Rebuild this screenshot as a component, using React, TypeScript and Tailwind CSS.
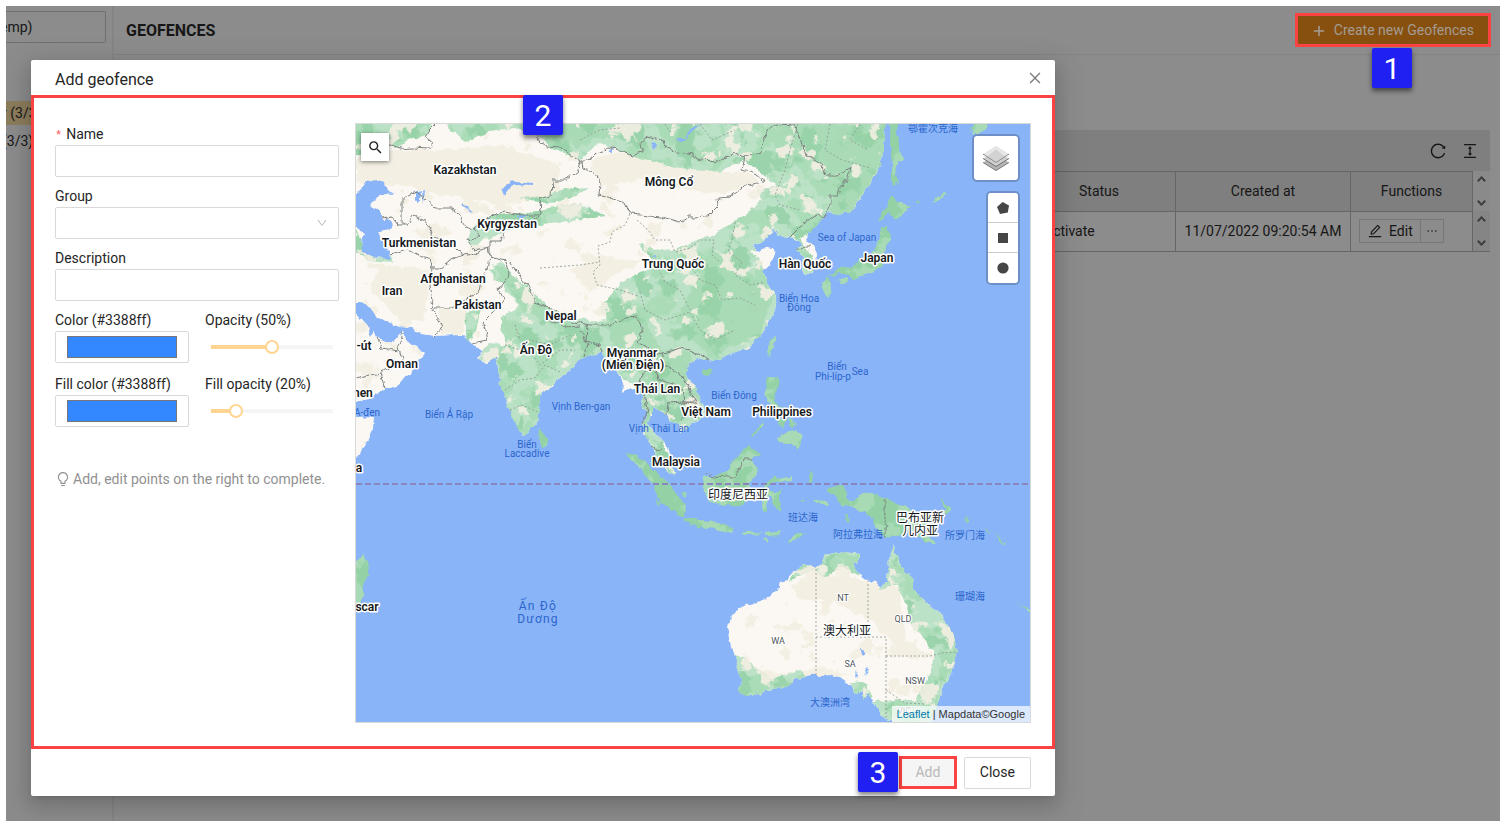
import { useState } from "react";
import type { CSSProperties, ReactNode } from "react";
import {
  AiOutlineBulb,
  AiOutlineClose,
  AiOutlineColumnHeight,
  AiOutlineDown,
  AiOutlineEdit,
  AiOutlineEllipsis,
  AiOutlinePlus,
  AiOutlineReload,
} from "react-icons/ai";
import { MdSearch } from "react-icons/md";

/* ---------- Map geometry ---------- */

const CONTINENT =
  "M340 110H887V124L883 145L883 153L880 165L872 180L862 197L855 208L847 214L837 213L828 212L823 218L817 225L810 232L806 239L813 246L817 255L818 265L813 272L805 275L802 270L803 257L798 251L802 244L798 240L790 237L779 236L777 230L773 228L766 238L760 243L753 245L755 250L761 251L768 247L777 252L774 259L768 266L762 270L766 281L772 290L777 297L775 310L767 327L760 338L747 348L733 353L720 357L713 362L708 360L697 358L690 363L685 370L687 377L693 385L700 397L705 407L703 417L693 423L682 432L678 425L670 422L667 413L662 410L658 407L652 408L652 415L648 423L652 432L660 438L667 447L672 460L675 475L665 470L658 460L653 447L645 435L643 425L647 418L643 403L641 390L630 388L622 392L623 382L617 372L610 360L602 353L597 352L587 357L580 358L573 368L563 375L553 385L542 393L539 410L537 423L532 428L523 437L517 427L508 407L502 390L497 370L496 355L492 360L485 363L477 357L483 352L478 348L472 343L463 335L433 336L417 333L405 325L400 327L387 323L377 317L372 310L363 303L340 303Z";

const DRY_COASTS = [
  "M340 306L356 312L367 325L370 337L374 330L377 337L384 342L391 342L402 333L403 329L405 340L417 347L423 353L417 365L410 375L397 385L383 390L370 398L356 403H340Z",
  "M340 419L374 417L373 428L363 448L356 458H340Z",
  "M728 627L732 613L748 605L768 598L778 590L780 582L787 580L792 573L803 564L815 568L822 563L825 555L833 553L837 551L843 552L860 554L859 562L853 563L858 573L868 580L880 586L887 582L889 560L893 546L898 557L903 570L910 575L915 592L930 605L940 615L953 633L957 653L952 673L942 690L938 703L930 722V735H892V722L880 715L875 703L867 693L863 700L863 690L855 693L850 685L840 678L830 674L815 675L800 678L783 688L765 690L755 696L743 696L738 690L742 682L737 663L732 647L729 633Z",
];

const ISLANDS = [
  "M891 115H897V142L903 160L897 163L896 175L899 186L895 182L892 187L892 165L890 145Z",
  "M972 115H995L983 130L977 135L973 135Z",
  "M890 193L900 203L909 205L907 212L897 219L888 213L880 222L880 213L887 208Z",
  "M882 227L887 225L891 238L887 248L885 265L880 268L872 273L860 275L855 281L850 275L837 274L830 277L838 268L852 267L863 258L873 252L880 238Z",
  "M837 280L847 277L849 281L840 284Z",
  "M821 282L828 278L833 285L828 297L824 292Z",
  "M770 340L777 337L773 348L769 354L767 347Z",
  "M702 370L713 367L712 373L705 377Z",
  "M539 428L548 440L547 447L541 449L538 443Z",
  "M768 377L778 378L779 387L773 397L777 403L783 407L787 413L777 408L770 403L765 393Z",
  "M778 437L793 430L802 433L802 443L797 450L790 443L780 442Z",
  "M752 435L763 421L762 426L753 436Z",
  "M780 418L786 420L783 428L779 424Z",
  "M788 417L796 424L791 428Z",
  "M625 453L638 455L650 467L663 477L670 485L678 495L685 505L684 517L675 513L660 500L650 480L637 465Z",
  "M685 518L700 520L717 522L732 527L733 533L715 530L697 527L685 522Z",
  "M742 532L750 531L762 534L744 535Z",
  "M765 533L780 532L779 535L766 536Z",
  "M760 538L768 539L768 542Z",
  "M788 541L795 536L805 532L800 537L790 543Z",
  "M703 475L710 478L725 472L733 462L748 445L760 453L752 460L757 473L750 483L747 497L743 507L727 505L710 502L703 487Z",
  "M765 483L772 478L793 477L792 481L773 482L767 488L773 492L783 488L777 495L782 512L777 510L772 498L767 495L768 515L763 513L762 500Z",
  "M811 470L814 475L813 482L809 483Z",
  "M812 500L826 501L827 504L814 503Z",
  "M800 501L806 502L803 504Z",
  "M826 491L835 486L845 488L848 500L855 500L867 493L883 497L907 507L917 512L928 523L920 532L933 540L938 544L923 540L910 530L897 537L885 536L875 528L872 517L855 508L842 507L838 498Z",
  "M846 515L849 516L848 523L845 522Z",
  "M940 500L950 505L953 509L946 515L940 516L947 510Z",
  "M963 515L970 521L967 522Z",
  "M985 527L992 532L987 531Z",
  "M996 533L1004 544L999 541Z",
  "M1016 601L1034 612V616Z",
  "M356 563L363 554L368 563L370 573L365 583L360 603L340 605V563Z",
  "M933 201L944 194L946 195L934 203Z",
  "M914 203L920 199L915 205Z",
  "M656 497L661 502L659 504Z",
  "M682 492L688 494L686 498Z",
];

const LIGHT_GREEN = [
  "M340 110H436L432 128L425 136L410 140L395 148L380 138L366 150L356 156H340Z",
  "M445 110H900L890 160L850 220L800 238L825 280H798L788 236L750 250L790 300L765 345L710 365L688 368L712 420L680 436L648 410L680 482L640 445L640 392L600 358L545 395L538 430L520 442L490 358L475 362L490 343L506 345L500 318L520 305L505 290L490 270L500 262L530 290L560 316L610 322L600 308L622 282L655 265L640 245L670 252L712 235L745 215L762 200L758 192L775 185L760 172L745 160L720 172L690 170L640 158L600 143L580 160L555 150L540 136L520 128L490 132L468 142L450 130Z",
  "M468 232L490 216L540 211L580 203L606 216L560 222L520 226L495 236L470 248Z",
  "M520 198L545 196L560 190L590 188L575 196L550 204Z",
  "M465 315L482 305L476 330L468 342Z",
  "M356 230L364 248L378 258L390 256L392 262L370 260L356 252Z",
  "M880 590L886 540H900L915 575L935 605L960 640L960 665L940 705L935 735H880L874 702L890 700L915 700L926 682L935 656L925 640L912 625L905 600L895 585Z",
  "M730 652L752 664L770 680L800 670L805 678L783 693L755 700L735 698Z",
  "M815 570L830 548H865L858 576L842 566L825 577Z",
  "M788 582L803 562L815 568L798 578Z",
  "M850 682L868 684L872 704L860 706Z",
];

const DARK_GREEN = [
  "M400 124H425L418 134L404 138Z",
  "M560 124H640L632 140L600 138L575 148Z",
  "M655 124H700L690 140L668 146Z",
  "M775 124H890L880 165L850 215L830 212L842 185L835 175L815 165Z",
  "M700 275L740 262L762 285L772 300L760 335L715 355L690 340L680 310Z",
  "M492 262L510 272L530 296L560 318L540 320L515 300Z",
  "M600 320L640 308L660 350L690 352L700 400L680 405L660 380L650 400L640 375L620 352Z",
  "M498 360L506 400L522 436L517 430L502 395Z",
  "M940 650L957 652L940 690Z",
  "M652 436L670 455L676 476L664 468Z",
];

const BEIGE = [
  "M356 160L400 150L440 150L500 145L560 165L560 195L500 205L440 195L400 185L356 182Z",
  "M590 160L620 152L660 160L720 172L745 172L760 182L720 195L690 190L640 180L600 185Z",
  "M640 262L610 278L590 292L570 270L600 255Z",
  "M380 265L430 270L425 320L400 320L370 290Z",
  "M440 310L470 300L462 334L440 334Z",
  "M500 345L512 350L505 362ZM520 375L540 385L532 405L520 400Z",
  "M790 585L820 572L860 580L900 590L905 640L940 660L900 650L870 620L830 600L800 600Z",
  "M765 675L820 668L850 676L815 678L780 684Z",
];

const LAKES = [
  "M357 192L367 182L377 180L385 182L387 190L395 195L383 194L375 198L370 203L373 208L382 215L382 222L387 219L393 225L390 230L378 232L383 242L390 252L389 259L377 257L363 252L362 238L365 233L350 222V192Z",
  "M501 190L506 184L516 182L532 184L532 186L516 185L507 190L504 196Z",
  "M415 192L420 190L419 202L415 200ZM421 192L424 191L423 202Z",
  "M462 202L471 211L470 213L463 206Z",
  "M517 216L528 214L523 219Z",
  "M674 140L684 138L692 128L702 123L692 133L680 142Z",
  "M652 142L656 143L654 150Z",
  "M608 150L614 148L612 154Z",
  "M861 648L866 650L865 656L862 655ZM864 665L868 669L866 675ZM855 671L858 674L857 679Z",
  "M650 256L655 256L654 260Z",
];

const BORDERS = [
  "M582 163L590 157L608 147L620 150L633 155L642 153L641 143L647 136L662 139L666 148L677 152L695 154L700 160L720 161L733 152L745 157L742 170L753 173L765 182L747 185L730 197L718 198L719 205L708 216L690 217L680 223L660 217L630 214L625 203L599 195L600 182L595 173L583 168Z",
  "M745 157L760 152L762 143L768 130L775 124L795 125L800 140L808 157L820 163L827 175L837 175L850 168L848 178L840 187L838 195L830 195L830 205L825 217L815 215L800 227L790 237",
  "M390 145L400 148L413 147L430 148L433 143L425 137L430 130L436 124",
  "M532 124L535 130L540 143L548 146L560 147L573 157L582 163",
  "M580 160L577 172L567 180L553 180L552 195L540 197L541 215L523 215L505 212L487 218L473 230L465 227L453 208L435 208L417 192L402 197V225",
  "M382 219L392 217L398 225L407 225L413 215L425 221L435 238L445 245L460 250L462 256",
  "M390 255L407 250L430 259L432 268L440 268L450 260L462 254L470 256L480 250L488 247L490 258",
  "M432 268L430 285L433 300L430 308L452 308L465 300L478 292L480 280L488 270L490 258",
  "M430 308L440 320L443 327L433 336",
  "M498 310L490 315L482 323L485 330L487 340L472 343",
  "M490 258L505 262L510 275L498 290L505 300L498 310",
  "M510 262L520 275L530 290L535 303L550 308L560 315L575 322L590 325L612 325L625 318L637 317",
  "M541 215L530 222L505 230L500 240L490 240L490 258",
  "M473 230L480 236L468 240L472 250L490 247",
  "M637 317L643 330L638 342L647 347L653 357L662 353L667 352L680 348L690 350L697 353L708 360",
  "M653 357L650 368L640 375L637 385L645 398L647 410L643 425",
  "M662 353L665 365L678 372L683 380L693 395L697 405L685 402L683 390L670 382L658 380L655 370",
  "M666 413L667 403L685 402L697 402L690 415L680 420",
  "M652 446L658 450L663 449",
  "M587 325L586 340L600 345L602 353M580 330L588 344L585 357",
  "M706 473L712 478L725 476L735 476L740 468L743 460L753 460",
  "M885 499V536M798 251L806 246L812 246",
  "M356 379L380 373L402 360L398 347L402 333M380 373L385 388M377 338L383 349L398 352",
  "M548 320L565 327L580 326",
];

const PROVINCES = [
  "M630 214L625 225L612 232L610 242L598 246L600 265L593 272L597 285L620 290L638 296",
  "M637 220L648 230L655 240L670 240L675 252L690 248L700 240L714 240L712 255L720 262",
  "M735 222L732 240L728 252L742 262L735 275L750 285L765 282",
  "M690 265L700 280L715 285L722 300L740 298L755 305M655 262L665 282L680 290L690 310",
  "M640 292L645 310L665 320L690 312L700 330L715 340L735 330",
  "M798 124L790 150L785 170L775 195L780 205L800 210",
  "M505 345L520 350L530 340L550 345L570 335M505 390L520 380L535 378L545 365L560 372",
  "M525 345L540 365L560 350L575 350M510 410L522 405L538 412M515 325L520 340",
  "M830 124L825 150L842 160L870 168M860 124L850 140L868 150",
  "M700 124L712 140L735 130M580 140L600 130L620 128M665 124L670 132",
  "M540 268L580 265L600 262",
  "M816 569V675M868 580V637M816 637H886V656M886 656V718M886 656H930L942 653L957 652M886 690L905 703L925 704",
];

type MapLabel = { x: number; y: number; text: string };

const COUNTRIES: MapLabel[] = [
  { x: 465, y: 174, text: "Kazakhstan" },
  { x: 669, y: 186, text: "Mông Cổ" },
  { x: 507, y: 228, text: "Kyrgyzstan" },
  { x: 419, y: 247, text: "Turkmenistan" },
  { x: 453, y: 283, text: "Afghanistan" },
  { x: 392, y: 295, text: "Iran" },
  { x: 478, y: 309, text: "Pakistan" },
  { x: 561, y: 320, text: "Nepal" },
  { x: 673, y: 268, text: "Trung Quốc" },
  { x: 805, y: 268, text: "Hàn Quốc" },
  { x: 877, y: 262, text: "Japan" },
  { x: 536, y: 354, text: "Ấn Độ" },
  { x: 632, y: 357, text: "Myanmar" },
  { x: 633, y: 369, text: "(Miến Điện)" },
  { x: 657, y: 393, text: "Thái Lan" },
  { x: 706, y: 416, text: "Việt Nam" },
  { x: 782, y: 416, text: "Philippines" },
  { x: 676, y: 466, text: "Malaysia" },
  { x: 402, y: 368, text: "Oman" },
  { x: 364, y: 350, text: "-út" },
  { x: 361, y: 397, text: "men" },
  { x: 359, y: 472, text: "a" },
  { x: 367, y: 611, text: "scar" },
];

const HAN_COUNTRIES: MapLabel[] = [
  { x: 738, y: 499, text: "印度尼西亚" },
  { x: 920, y: 522, text: "巴布亚新" },
  { x: 920, y: 535, text: "几内亚" },
  { x: 847, y: 635, text: "澳大利亚" },
];

const SEAS: MapLabel[] = [
  { x: 847, y: 241, text: "Sea of Japan" },
  { x: 799, y: 302, text: "Biển Hoa" },
  { x: 799, y: 311, text: "Đông" },
  { x: 837, y: 370, text: "Biển" },
  { x: 833, y: 380, text: "Phi-líp-p" },
  { x: 860, y: 375, text: "Sea" },
  { x: 734, y: 399, text: "Biển Đông" },
  { x: 659, y: 432, text: "Vịnh Thái Lan" },
  { x: 581, y: 410, text: "Vịnh Ben-gan" },
  { x: 449, y: 418, text: "Biển Ả Rập" },
  { x: 527, y: 448, text: "Biển" },
  { x: 527, y: 457, text: "Laccadive" },
  { x: 367, y: 416, text: "A-đen" },
  { x: 933, y: 132, text: "鄂霍次克海" },
  { x: 803, y: 521, text: "班达海" },
  { x: 858, y: 538, text: "阿拉弗拉海" },
  { x: 965, y: 539, text: "所罗门海" },
  { x: 970, y: 600, text: "珊瑚海" },
  { x: 830, y: 706, text: "大澳洲湾" },
];

const STATES: MapLabel[] = [
  { x: 843, y: 601, text: "NT" },
  { x: 903, y: 622, text: "QLD" },
  { x: 778, y: 644, text: "WA" },
  { x: 850, y: 667, text: "SA" },
  { x: 915, y: 684, text: "NSW" },
  { x: 904, y: 714, text: "VIC" },
];

function Labels({ items, className }: { items: MapLabel[]; className: string }) {
  return (
    <g className={className} textAnchor="middle">
      {items.map((l) => (
        <text key={l.text + l.y} x={l.x} y={l.y}>
          {l.text}
        </text>
      ))}
    </g>
  );
}

function Shapes({ paths }: { paths: string[] }) {
  return (
    <>
      {paths.map((d) => (
        <path key={d} d={d} />
      ))}
    </>
  );
}

function WorldMap() {
  return (
    <svg
      viewBox="356 124 674 598"
      preserveAspectRatio="xMidYMid slice"
      className="block h-full w-full"
      role="img"
      aria-label="Map"
    >
      <defs>
        <filter id="coast" x="0" y="0" width="1" height="1">
          <feTurbulence type="fractalNoise" baseFrequency="0.11" numOctaves="3" seed="4" />
          <feDisplacementMap in="SourceGraphic" scale="7" xChannelSelector="R" yChannelSelector="G" />
        </filter>
        <filter id="mid" x="0" y="0" width="1" height="1" colorInterpolationFilters="sRGB">
          <feTurbulence type="fractalNoise" baseFrequency="0.04" numOctaves="4" seed="8" />
          <feColorMatrix values="0 0 0 0 0.66 0 0 0 0 0.86 0 0 0 0 0.71 0 0 0 18 -9" />
        </filter>
        <filter id="deep" x="0" y="0" width="1" height="1" colorInterpolationFilters="sRGB">
          <feTurbulence type="fractalNoise" baseFrequency="0.04" numOctaves="4" seed="21" />
          <feColorMatrix values="0 0 0 0 0.58 0 0 0 0 0.82 0 0 0 0 0.65 0 0 0 18 -10.4" />
        </filter>
        <filter id="bare" x="0" y="0" width="1" height="1" colorInterpolationFilters="sRGB">
          <feTurbulence type="fractalNoise" baseFrequency="0.05" numOctaves="4" seed="33" />
          <feColorMatrix values="0 0 0 0 0.953 0 0 0 0 0.937 0 0 0 0 0.89 0 0 0 18 -11" />
        </filter>
        <clipPath id="land">
          <path d={CONTINENT} />
          <Shapes paths={DRY_COASTS} />
        </clipPath>
        <clipPath id="green">
          <Shapes paths={LIGHT_GREEN} />
        </clipPath>
        <clipPath id="isles">
          <Shapes paths={ISLANDS} />
        </clipPath>
      </defs>

      <rect x="340" y="110" width="710" height="630" fill="#8ab4f8" />
      <g filter="url(#coast)">
        <rect x="340" y="110" width="710" height="630" fill="#8ab4f8" />
        <g clipPath="url(#land)">
          <rect x="340" y="110" width="710" height="630" fill="#fbf8f3" />
          <g fill="#f3efe3">
            <Shapes paths={BEIGE} />
          </g>
          <rect x="340" y="110" width="710" height="630" filter="url(#bare)" />
          <g fill="#bbe2c6">
            <Shapes paths={LIGHT_GREEN} />
          </g>
          <g fill="#94d2a5" fillOpacity="0.45">
            <Shapes paths={DARK_GREEN} />
          </g>
          <g clipPath="url(#green)">
            <rect x="340" y="110" width="710" height="630" opacity="0.8" filter="url(#mid)" />
            <rect x="340" y="110" width="710" height="630" opacity="0.8" filter="url(#deep)" />
            <rect x="340" y="110" width="710" height="630" opacity="0.9" filter="url(#bare)" />
          </g>
        </g>
        <g fill="#94d2a5">
          <Shapes paths={ISLANDS} />
        </g>
        <g clipPath="url(#isles)">
          <rect x="340" y="110" width="710" height="630" filter="url(#mid)" />
        </g>
        <g fill="#8ab4f8">
          <Shapes paths={LAKES} />
        </g>
        <g fill="none" stroke="#7d8280" strokeWidth="1">
          <Shapes paths={BORDERS} />
        </g>
      </g>
      <g fill="none" stroke="#8d9490" strokeWidth="0.8" strokeDasharray="2 2">
        <Shapes paths={PROVINCES} />
      </g>
      <path d="M356 484H1030" stroke="#8b86bd" strokeWidth="2" strokeDasharray="6 3" />

      <Labels
        items={SEAS}
        className="fill-[#2a66cc] font-['Roboto','Noto_Sans_CJK_SC',sans-serif] text-[10px]"
      />
      <g
        textAnchor="middle"
        className="fill-[#2a66cc] font-['Roboto',sans-serif] text-[12px] tracking-widest"
      >
        <text x="538" y="610">Ấn Độ</text>
        <text x="538" y="623">Dương</text>
      </g>
      <Labels
        items={STATES}
        className="fill-[#50565a] stroke-white stroke-2 font-['Roboto',sans-serif] text-[9px] [paint-order:stroke]"
      />
      <Labels
        items={COUNTRIES}
        className="fill-[#15181b] stroke-white stroke-3 font-['Roboto',sans-serif] text-[12px] font-semibold [paint-order:stroke] [stroke-linejoin:round]"
      />
      <Labels
        items={HAN_COUNTRIES}
        className="fill-[#15181b] stroke-white stroke-3 font-['Noto_Sans_CJK_SC',sans-serif] text-[12px] [paint-order:stroke] [stroke-linejoin:round]"
      />
    </svg>
  );
}

/* ---------- Small parts ---------- */

function Step({ n, className }: { n: number; className: string }) {
  return (
    <span
      className={`absolute z-10 flex h-10 w-10 items-center justify-center rounded-xs bg-[#2020f2] pt-0.5 text-[30px] leading-none text-white shadow-[0_3px_5px_rgba(0,0,0,0.5)] ${className}`}
    >
      {n}
    </span>
  );
}

function Field({ id, label, required, children }: { id: string; label: string; required?: boolean; children: ReactNode }) {
  return (
    <div className="flex flex-col">
      <label htmlFor={id} className="leading-[22px]">
        {required && <span className="mr-1 font-['Liberation_Mono',monospace] text-xs text-[#ff4d4f]">*</span>}
        {label}
      </label>
      {children}
    </div>
  );
}

const BOX = "h-8 w-full rounded-xs border border-[#d9d9d9] bg-white";
const SWATCH =
  "px-[11px] py-1 [&::-webkit-color-swatch-wrapper]:p-0 [&::-webkit-color-swatch]:rounded-none [&::-webkit-color-swatch]:border [&::-webkit-color-swatch]:border-[#777]";
const SLIDER =
  "my-[9px] h-3.5 w-full appearance-none bg-transparent [&::-webkit-slider-runnable-track]:h-1 [&::-webkit-slider-thumb]:-mt-[5px] [&::-webkit-slider-thumb]:h-3.5 [&::-webkit-slider-thumb]:w-3.5 [&::-webkit-slider-thumb]:appearance-none [&::-webkit-slider-thumb]:rounded-full [&::-webkit-slider-thumb]:border-2 [&::-webkit-slider-thumb]:border-[#ffd591] [&::-webkit-slider-thumb]:bg-white [&::-webkit-slider-runnable-track]:bg-[linear-gradient(to_right,transparent_6px,#ffd591_6px,#ffd591_var(--at),#f5f5f5_var(--at),#f5f5f5_calc(100%-6px),transparent_calc(100%-6px))]";

function Slider({ id, value, onChange }: { id: string; value: number; onChange: (v: number) => void }) {
  return (
    <input
      id={id}
      type="range"
      min={0}
      max={100}
      value={value}
      onChange={(e) => onChange(Number(e.target.value))}
      className={SLIDER}
      style={{ "--at": `${value}%` } as CSSProperties}
    />
  );
}

function LayersIcon() {
  return (
    <svg viewBox="0 0 26 26" className="h-[26px] w-[26px]" aria-hidden="true">
      <path d="M0 17.5L13 25.5L26 17.5L13 9.5Z" fill="#b4b4b4" />
      <path d="M0 17.5L13 25.5L26 17.5" fill="none" stroke="#7a7a7a" />
      <path d="M0 13.5L13 21.5L26 13.5L13 5.5Z" fill="#cfcfcf" />
      <path d="M0 13.5L13 21.5L26 13.5" fill="none" stroke="#6f6f6f" />
      <path d="M0 9L13 17.5L26 9L13 .8Z" fill="#e6e6e6" />
      <path d="M4 11.5L13 4.5L22 11.5L13 17Z" fill="#d2d2d2" />
      <path d="M0 9L13 17.5L26 9" fill="none" stroke="#8a8a8a" />
    </svg>
  );
}

function Arrow({ up }: { up?: boolean }) {
  return (
    <svg viewBox="0 0 9 6" className="h-1.5 w-[9px]" fill="none" stroke="#3d3d3d" strokeWidth="2" aria-hidden="true">
      <path d={up ? "M.8 5.2L4.5 1.4L8.2 5.2" : "M.8 .8L4.5 4.6L8.2 .8"} />
    </svg>
  );
}

function MapPanel() {
  const tool = "flex h-[30px] w-[30px] items-center justify-center bg-white";
  return (
    <div className="relative h-[600px] min-w-0 overflow-hidden border border-[#d9d9d9] bg-[#8ab4f8]">
      <WorldMap />
      <button
        aria-label="Search"
        className="absolute top-[9px] left-[5px] flex h-7 w-7 items-center justify-center bg-white text-[#222] shadow-[0_1px_4px_rgba(0,0,0,0.5)]"
      >
        <MdSearch size={17} />
      </button>
      <div className="absolute top-2.5 right-2.5 flex flex-col items-end gap-[9px]">
        <button
          aria-label="Layers"
          className="flex h-12 w-12 items-center justify-center rounded-[5px] border-2 border-black/20 bg-white bg-clip-padding"
        >
          <LayersIcon />
        </button>
        <div className="flex flex-col divide-y divide-[#ccc] overflow-hidden rounded-[5px] border-2 border-black/20 bg-clip-padding">
          <button aria-label="Draw a polygon" className={tool}>
            <svg viewBox="0 0 12 12" className="h-3 w-3" fill="#464646">
              <path d="M5.6 0L12 3.6L10.8 10.4L3 12L0 5Z" />
            </svg>
          </button>
          <button aria-label="Draw a rectangle" className={tool}>
            <svg viewBox="0 0 10 10" className="h-2.5 w-2.5" fill="#464646">
              <path d="M0 0H10V10H0Z" />
            </svg>
          </button>
          <button aria-label="Draw a circle" className={tool}>
            <svg viewBox="0 0 12 12" className="h-3 w-3" fill="#464646">
              <circle cx="6" cy="6" r="5.6" />
            </svg>
          </button>
        </div>
      </div>
      <div className="absolute right-0 bottom-0 bg-white/70 px-[5px] font-['Liberation_Sans',sans-serif] text-[11px] leading-4 text-[#333]">
        <a href="#leaflet" className="text-[#0078a8]">Leaflet</a> | Mapdata©Google
      </div>
    </div>
  );
}

function GeofenceDialog() {
  const [color, setColor] = useState("#3388ff");
  const [fill, setFill] = useState("#3388ff");
  const [opacity, setOpacity] = useState(50);
  const [fillOpacity, setFillOpacity] = useState(20);

  return (
    <section
      role="dialog"
      aria-labelledby="dialog-title"
      className="w-full max-w-[1024px] self-start rounded-xs bg-white text-[#262626] shadow-[0_3px_6px_-4px_rgba(0,0,0,0.2),0_6px_16px_rgba(0,0,0,0.12),0_9px_28px_8px_rgba(0,0,0,0.1)]"
    >
      <header className="flex h-[35px] items-center justify-between pr-3 pl-6">
        <h2 id="dialog-title" className="pt-1 text-base">Add geofence</h2>
        <button aria-label="Close dialog" className="text-[#7a7a7a]">
          <AiOutlineClose size={16} />
        </button>
      </header>

      <div className="relative grid grid-cols-[284px_1fr] gap-4 border-3 border-[#fb4343] px-[21px] pt-[25px] pb-[23px]">
        <Step n={2} className="-top-[3px] left-[489px]" />
        <form className="flex flex-col gap-2">
          <Field id="name" label="Name" required>
            <input id="name" className={`${BOX} px-3`} />
          </Field>
          <Field id="group" label="Group">
            <div className="relative">
              <select id="group" className={`${BOX} appearance-none px-3`}>
                <option></option>
              </select>
              <AiOutlineDown size={12} className="pointer-events-none absolute top-2.5 right-[11px] text-[#bfbfbf]" />
            </div>
          </Field>
          <Field id="description" label="Description">
            <input id="description" className={`${BOX} px-3`} />
          </Field>
          <div className="grid grid-cols-2 gap-x-4 gap-y-2.5">
            <Field id="color" label={`Color (${color})`}>
              <input id="color" type="color" value={color} onChange={(e) => setColor(e.target.value)} className={`${BOX} ${SWATCH}`} />
            </Field>
            <Field id="opacity" label={`Opacity (${opacity}%)`}>
              <Slider id="opacity" value={opacity} onChange={setOpacity} />
            </Field>
            <Field id="fill" label={`Fill color (${fill})`}>
              <input id="fill" type="color" value={fill} onChange={(e) => setFill(e.target.value)} className={`${BOX} ${SWATCH}`} />
            </Field>
            <Field id="fill-opacity" label={`Fill opacity (${fillOpacity}%)`}>
              <Slider id="fill-opacity" value={fillOpacity} onChange={setFillOpacity} />
            </Field>
          </div>
          <p className="mt-[34px] flex items-center gap-0.5 whitespace-nowrap text-[#919191]">
            <AiOutlineBulb size={16} className="shrink-0" />
            Add, edit points on the right to complete.
          </p>
        </form>
        <MapPanel />
      </div>

      <footer className="flex h-[47px] items-center justify-end gap-[7px] px-6">
        <div className="relative">
          <Step n={3} className="-top-1 right-full mr-px" />
          <button disabled className="block h-[33px] w-[58px] border-3 border-[#fb4343] bg-[#f5f5f5] pb-0.5 text-[#b8b8b8]">
            Add
          </button>
        </div>
        <button className="h-8 rounded-xs border border-[#d9d9d9] bg-white px-[15px] pb-0.5">Close</button>
      </footer>
    </section>
  );
}

function GeofenceTable() {
  const cell = "border border-[#666] px-2 pb-0.5";
  return (
    <div className="mr-2.5 ml-3">
      <div className="flex h-[41px] items-center justify-end gap-3.5 bg-[#7f7f7f] pr-[11px]">
        <button aria-label="Reload">
          <AiOutlineReload size={18} />
        </button>
        <button aria-label="Density">
          <AiOutlineColumnHeight size={18} />
        </button>
      </div>
      <div className="flex">
        <table className="min-w-0 flex-1 table-fixed border-collapse">
          <colgroup>
            <col />
            <col className="w-[153px]" />
            <col className="w-[175px]" />
            <col className="w-[122px]" />
          </colgroup>
          <thead>
            <tr className="h-10 bg-[#7f7f7f]">
              <th className={cell}></th>
              <th className={`${cell} font-normal`}>Status</th>
              <th className={`${cell} font-normal`}>Created at</th>
              <th className={`${cell} font-normal`}>Functions</th>
            </tr>
          </thead>
          <tbody>
            <tr className="h-10">
              <td className={cell}></td>
              <td className="border border-[#666] px-[21px] pb-0.5">Activate</td>
              <td className={`${cell} text-center whitespace-nowrap`}>11/07/2022 09:20:54 AM</td>
              <td className={cell}>
                <div className="flex">
                  <button className="flex h-6 items-center gap-1.5 border border-[#777] px-[7px]">
                    <AiOutlineEdit size={16} />
                    Edit
                  </button>
                  <button aria-label="More" className="flex h-6 items-center border border-l-0 border-[#777] px-1">
                    <AiOutlineEllipsis size={14} />
                  </button>
                </div>
              </td>
            </tr>
          </tbody>
        </table>
        <div className="flex w-[17px] flex-col">
          <div className="flex flex-1 flex-col items-center justify-between bg-[#8a8a8a] py-[5px]">
            <Arrow up />
            <Arrow />
          </div>
          <div className="flex flex-1 flex-col items-center justify-between border-b border-[#666] bg-[#858585] py-[5px]">
            <Arrow up />
            <Arrow />
          </div>
        </div>
      </div>
    </div>
  );
}

export default function App() {
  return (
    <div className="flex min-h-screen flex-col bg-white pt-1.5 pr-[7px] pb-1 pl-1.5 font-['Roboto',sans-serif] text-sm text-[#161616]">
      <div className="relative flex flex-1 overflow-hidden bg-[#8c8c8c]">
        <aside className="flex w-[108px] shrink-0 flex-col overflow-hidden border-r-2 border-[#858585] pt-[5px]">
          <input
            aria-label="Search groups"
            defaultValue="emp)"
            className="mr-1.5 h-8 rounded-r-xs border border-l-0 border-[#6f6f6f] bg-transparent -indent-1.5"
          />
          <div className="mt-[58px] flex flex-col gap-1">
            <button className="h-6 bg-[#8c7d5c] text-left">
              <span className="-ml-1">r (3/3)</span>
            </button>
            <button className="h-6 text-left">
              <span className="-ml-1">(3/3)</span>
            </button>
          </div>
        </aside>

        <main className="min-w-0 flex-1">
          <header className="flex h-[49px] items-center justify-between border-b border-[#838383] pr-[9px] pl-3">
            <h1 className="pt-px text-base font-bold">GEOFENCES</h1>
            <div className="relative">
              <button className="flex h-[34px] items-center gap-2 border-3 border-[#fb4343] bg-[#88500f] px-3.5 text-[#a39c93]">
                <AiOutlinePlus size={14} strokeWidth={40} className="mt-0.5" stroke="currentColor" />
                Create new Geofences
              </button>
              <Step n={1} className="top-full left-1/2 mt-px -ml-[21px]" />
            </div>
          </header>
          <div className="pt-[75px]">
            <GeofenceTable />
          </div>
        </main>

        <div className="absolute inset-0 flex pt-[54px] pr-[25px] pl-[25px]">
          <GeofenceDialog />
        </div>
      </div>
    </div>
  );
}
